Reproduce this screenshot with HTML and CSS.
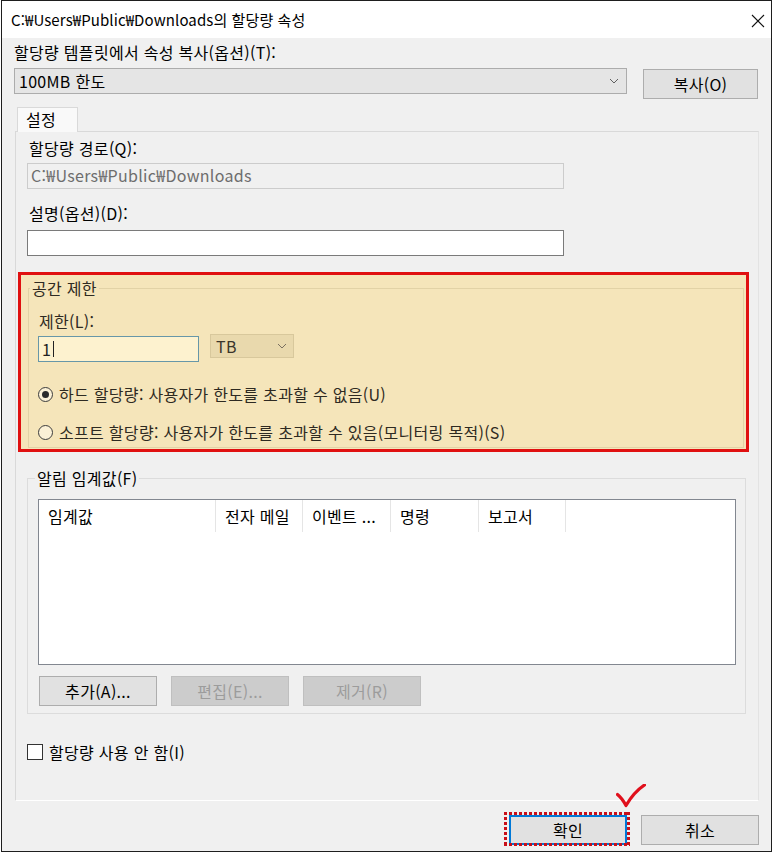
FILE: index.html
```html
<!DOCTYPE html>
<html lang="ko">
<head>
<meta charset="utf-8">
<title>할당량 속성</title>
<link rel="stylesheet" href="styles.css">
</head>
<body>
<div class="window">
  <div class="titlebar">
    <span class="title">C:₩Users₩Public₩Downloads의 할당량 속성</span>
    <svg class="close" width="14" height="14" viewBox="0 0 14 14"><path d="M1 1 L13 13 M13 1 L1 13" stroke="#111" stroke-width="1.1" fill="none"/></svg>
  </div>
  <div class="body">
    <div class="label top-label">할당량 템플릿에서 속성 복사(옵션)(T):</div>
    <div class="template-row">
      <div class="combo template">
        <span>100MB 한도</span>
        <svg class="chev" width="10" height="6" viewBox="0 0 10 6"><path d="M1 1 L5 5 L9 1" stroke="#606060" stroke-width="1" fill="none"/></svg>
      </div>
      <div class="btn copy">복사(O)</div>
    </div>
    <div class="tabs"><div class="tab">설정</div></div>
    <div class="panel">
      <div class="label indent">할당량 경로(Q):</div>
      <div class="input disabled">C:₩Users₩Public₩Downloads</div>
      <div class="label indent desc-label">설명(옵션)(D):</div>
      <div class="input desc"></div>

      <div class="highlight">
        <fieldset class="group space">
          <legend>공간 제한</legend>
          <div class="label limit-label">제한(L):</div>
          <div class="limit-row">
            <div class="input limit">1<span class="caret"></span></div>
            <div class="combo unit">
              <span>TB</span>
              <svg class="chev" width="10" height="6" viewBox="0 0 10 6"><path d="M1 1 L5 5 L9 1" stroke="#7a7060" stroke-width="1" fill="none"/></svg>
            </div>
          </div>
          <div class="radio-row first">
            <span class="radio checked"><span class="dot"></span></span>
            <span>하드 할당량: 사용자가 한도를 초과할 수 없음(U)</span>
          </div>
          <div class="radio-row second">
            <span class="radio"></span>
            <span>소프트 할당량: 사용자가 한도를 초과할 수 있음(모니터링 목적)(S)</span>
          </div>
        </fieldset>
      </div>

      <fieldset class="group notify">
        <legend>알림 임계값(F)</legend>
        <div class="listview">
          <div class="lv-header">
            <div class="col c1">임계값</div>
            <div class="col c2">전자 메일</div>
            <div class="col c3">이벤트 ...</div>
            <div class="col c4">명령</div>
            <div class="col c5">보고서</div>
          </div>
        </div>
        <div class="btn-row">
          <div class="btn">추가(A)...</div>
          <div class="btn disabled">편집(E)...</div>
          <div class="btn disabled">제거(R)</div>
        </div>
      </fieldset>

      <div class="check-row">
        <span class="checkbox"></span>
        <span>할당량 사용 안 함(I)</span>
      </div>
    </div>

    <div class="footer">
      <div class="ok-wrap">
        <div class="btn ok">확인</div>
        <span class="dotted"></span>
        <svg class="tick" width="30" height="24" viewBox="0 0 30 24"><path d="M1.5 10.5 C4 12.5 7 16 10 21.5 C15 13 21 6 28.5 1" stroke="#e0101c" stroke-width="3.2" stroke-linecap="round" stroke-linejoin="round" fill="none"/></svg>
      </div>
      <div class="btn cancel">취소</div>
    </div>
  </div>
</div>
</body>
</html>
```

FILE: styles.css
```css
* { box-sizing: border-box; }

html, body {
  margin: 0;
  padding: 0;
  background: #ffffff;
}

body {
  font-family: "Noto Sans CJK KR", "Noto Sans", sans-serif;
  font-size: 16px;
  letter-spacing: 0.3px;
  color: #000;
}

.window {
  width: 771px;
  height: 852px;
  margin-left: 1px;
  border: 1px solid #1e1e1e;
  background: #f0f0f0;
  display: flex;
  flex-direction: column;
}

.titlebar {
  height: 37px;
  flex: none;
  background: #ffffff;
  display: flex;
  align-items: center;
  justify-content: space-between;
  padding: 0 6px 0 9px;
}

.title {
  font-size: 15px;
  line-height: 20px;
  letter-spacing: 0.1px;
}

.close {
  display: block;
  margin-top: 2px;
}

.body {
  flex: 1;
  padding: 4px 12px 0 12px;
  display: flex;
  flex-direction: column;
}

.label {
  line-height: 20px;
  height: 20px;
  white-space: nowrap;
}

.template-row {
  display: flex;
  align-items: flex-start;
  gap: 16px;
  margin-top: 6px;
}

.combo {
  display: flex;
  align-items: center;
  justify-content: space-between;
  background: #e5e5e5;
  border: 1px solid #acacac;
  line-height: 20px;
}

.combo.template {
  width: 613px;
  height: 26px;
  padding: 0 7px 0 4px;
}

.chev { display: block; }

.btn {
  display: flex;
  align-items: center;
  justify-content: center;
  height: 30px;
  width: 118px;
  background: #e1e1e1;
  border: 1px solid #adadad;
  line-height: 20px;
  white-space: nowrap;
}

.btn.copy {
  width: 115px;
  margin-top: 1px;
}

.btn.disabled {
  background: #cccccc;
  border-color: #bfbfbf;
  color: #9c9c9c;
}

.tabs {
  display: flex;
  margin-top: 8px;
  padding-left: 3px;
  position: relative;
  z-index: 1;
}

.tab {
  width: 61px;
  height: 25px;
  background: #f9f9f9;
  border: 1px solid #d9d9d9;
  border-bottom: none;
  padding-left: 8px;
  line-height: 22px;
}

.panel {
  margin-left: 1px;
  margin-top: -1px;
  height: 670px;
  border: 1px solid #d9d9d9;
  border-bottom-color: #ffffff;
  border-right-color: #e3e3e3;
  padding: 6px 0 0 11px;
}

.indent { margin-left: 2px; }

.input {
  background: #ffffff;
  border: 1px solid #7a7a7a;
  height: 26px;
  width: 537px;
  line-height: 22px;
  padding-left: 3px;
}

.input.disabled {
  margin-top: 5px;
  background: #f0f0f0;
  border-color: #cccccc;
  color: #6d6d6d;
}

.desc-label { margin-top: 14px; }

.input.desc { margin-top: 7px; }

.highlight {
  margin-top: 16px;
  margin-left: -9px;
  width: 731px;
  border: 3px solid #e01010;
  background: #f5e5ba;
  padding: 3px 2px 1px 7px;
  color: #2e2a22;
}

fieldset.group {
  margin: 0;
  padding: 0;
  min-width: 0;
}

fieldset.group legend {
  padding: 0 2px;
  line-height: 20px;
  height: 20px;
}

.group.space {
  border: 1px solid #e2d2a6;
  padding: 0 0 5px 9px;
}

.group.space legend {
  margin-left: -8px;
}

.limit-label {
  margin-top: 13px;
  margin-left: 1px;
}

.limit-row {
  display: flex;
  align-items: flex-start;
  gap: 11px;
  margin-top: 3px;
}

.input.limit {
  width: 161px;
  margin-top: 2px;
  background: #fdf2cf;
  border-color: #6797a8;
  color: #222;
  display: flex;
  align-items: center;
}

.caret {
  display: inline-block;
  width: 1px;
  height: 16px;
  background: #222;
  margin-left: 2px;
}

.combo.unit {
  width: 84px;
  height: 24px;
  background: #e9d9ad;
  border-color: #d8c89c;
  padding: 0 6px 0 5px;
  color: #3a352b;
}

.radio-row {
  display: flex;
  align-items: center;
  height: 20px;
  gap: 6px;
  white-space: nowrap;
}

.radio-row.first { margin-top: 22px; }
.radio-row.second { margin-top: 18px; }

.radio {
  width: 15px;
  height: 15px;
  border-radius: 50%;
  border: 1px solid #3c3c3c;
  background: #fbf1d6;
  display: flex;
  align-items: center;
  justify-content: center;
  flex: none;
}

.radio .dot {
  width: 7px;
  height: 7px;
  border-radius: 50%;
  background: #2a2a2a;
}

.group.notify {
  margin-top: 16px;
  width: 719px;
  border: 1px solid #dcdcdc;
  padding: 0 0 7px 10px;
}

.group.notify legend {
  margin-left: -3px;
}

.listview {
  margin-top: 11px;
  width: 698px;
  height: 166px;
  background: #ffffff;
  border: 1px solid #828790;
}

.lv-header {
  display: flex;
  height: 32px;
}

.col {
  border-right: 1px solid #e5e5e5;
  padding-left: 9px;
  line-height: 32px;
  white-space: nowrap;
  overflow: hidden;
}

.c1 { width: 177px; }
.c2 { width: 87px; }
.c3 { width: 88px; }
.c4 { width: 88px; }
.c5 { width: 87px; }

.btn-row {
  display: flex;
  gap: 14px;
  margin-top: 11px;
  margin-left: 1px;
}

.btn-row .btn { width: 118px; }

.check-row {
  display: flex;
  align-items: center;
  gap: 6px;
  margin-top: 29px;
  height: 17px;
}

.checkbox {
  width: 16px;
  height: 16px;
  border: 1px solid #333333;
  background: #ffffff;
  flex: none;
}

.footer {
  display: flex;
  justify-content: flex-end;
  gap: 14px;
  margin-top: 14px;
}

.ok-wrap {
  position: relative;
}

.btn.ok {
  border: 2px solid #0078d7;
}

.dotted {
  position: absolute;
  left: -5px;
  top: -3px;
  width: 126px;
  height: 34px;
  background:
    repeating-linear-gradient(90deg, #c8101a 0 3px, transparent 3px 5px) left top / 100% 3px no-repeat,
    repeating-linear-gradient(90deg, #c8101a 0 3px, transparent 3px 5px) left bottom / 100% 3px no-repeat,
    repeating-linear-gradient(180deg, #c8101a 0 3px, transparent 3px 5px) left top / 3px 100% no-repeat,
    repeating-linear-gradient(180deg, #c8101a 0 3px, transparent 3px 5px) right top / 3px 100% no-repeat;
}

.tick {
  position: absolute;
  left: 107px;
  top: -31px;
}
```
